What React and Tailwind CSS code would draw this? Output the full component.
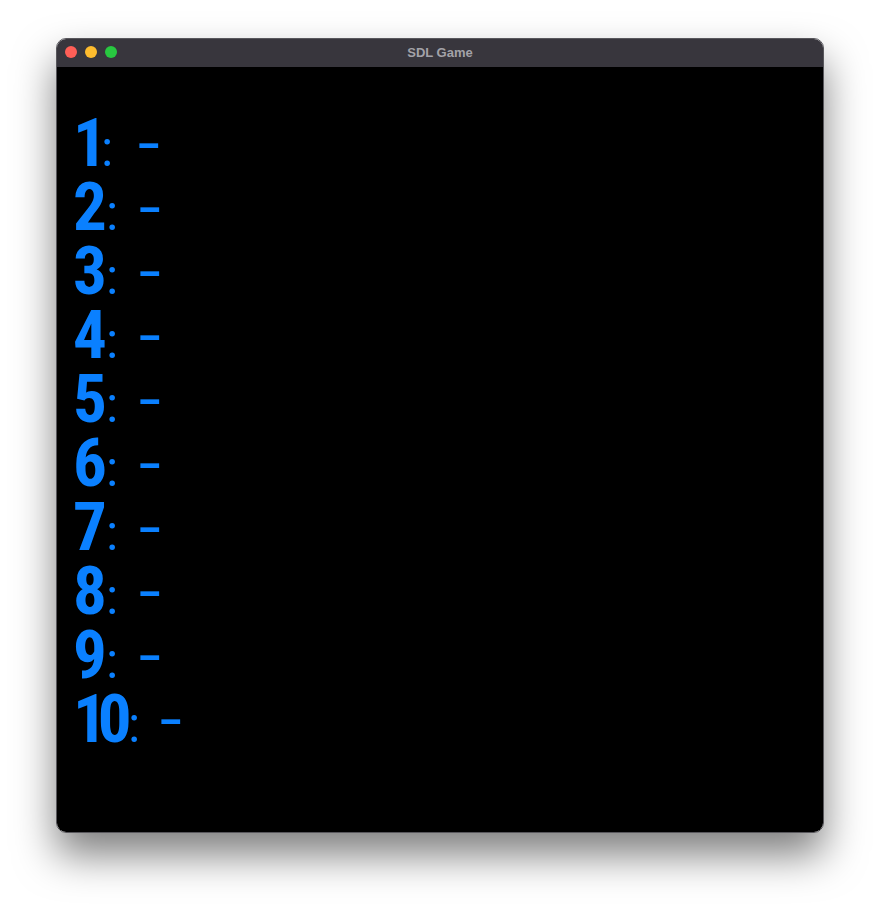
import React from 'react';

// high score rows as drawn in the SDL window
const rows = [
  { label: '1', numW: 'w-[28px]', track: 'tracking-[-5px]', colonW: 'w-[35px]' },
  { label: '2', numW: 'w-[33px]', track: '', colonW: 'w-[31px]' },
  { label: '3', numW: 'w-[33px]', track: '', colonW: 'w-[31px]' },
  { label: '4', numW: 'w-[33px]', track: '', colonW: 'w-[31px]' },
  { label: '5', numW: 'w-[33px]', track: '', colonW: 'w-[31px]' },
  { label: '6', numW: 'w-[33px]', track: '', colonW: 'w-[31px]' },
  { label: '7', numW: 'w-[33px]', track: '', colonW: 'w-[31px]' },
  { label: '8', numW: 'w-[33px]', track: '', colonW: 'w-[31px]' },
  { label: '9', numW: 'w-[33px]', track: '', colonW: 'w-[31px]' },
  { label: '10', numW: 'w-[55px]', track: 'tracking-[-9px]', colonW: 'w-[30px]' },
];

const ScoreRow = ({ label, numW, track, colonW }) => (
  <div className="h-[64px] leading-[64px] whitespace-nowrap text-[#0a80ff]">
    <span className={`inline-block ${numW}`}>
      <span className={`inline-block ${track} text-[67px] font-bold font-['Roboto_Condensed','Liberation_Sans',sans-serif]`}>{label}</span>
    </span>
    <span className={`inline-block ${colonW} text-[50px] font-['Roboto_Condensed','Liberation_Sans',sans-serif]`}>:</span>
    <span className="inline-block origin-left scale-x-[1.3] -translate-y-[5px] text-[59px] font-['Liberation_Sans',Arial,sans-serif]">-</span>
  </div>
);

export default function App() {
  return (
    <div className="h-[908px] w-[880px] bg-white pt-[38px] pl-[56px]">
      <div className="w-[768px] h-[795px] rounded-[10px] overflow-hidden border border-[#58575c] shadow-[0_22px_40px_rgba(0,0,0,0.5)] flex flex-col">
        <div className="relative h-[28px] bg-[#38363d] flex items-center justify-center shrink-0">
          <div className="absolute left-[8px] top-[7px] flex gap-[8px]">
            <span className="w-[12px] h-[12px] rounded-full bg-[#ff5f57]" />
            <span className="w-[12px] h-[12px] rounded-full bg-[#febc2e]" />
            <span className="w-[12px] h-[12px] rounded-full bg-[#28c840]" />
          </div>
          <span className="text-[13px] font-bold text-[#a3a2a8] font-['Liberation_Sans',Arial,sans-serif]">SDL Game</span>
        </div>
        <div className="flex-1 bg-black pt-[44px] pl-[16px]">
          {rows.map(r => (
            <ScoreRow key={r.label} {...r} />
          ))}
        </div>
      </div>
    </div>
  );
}
